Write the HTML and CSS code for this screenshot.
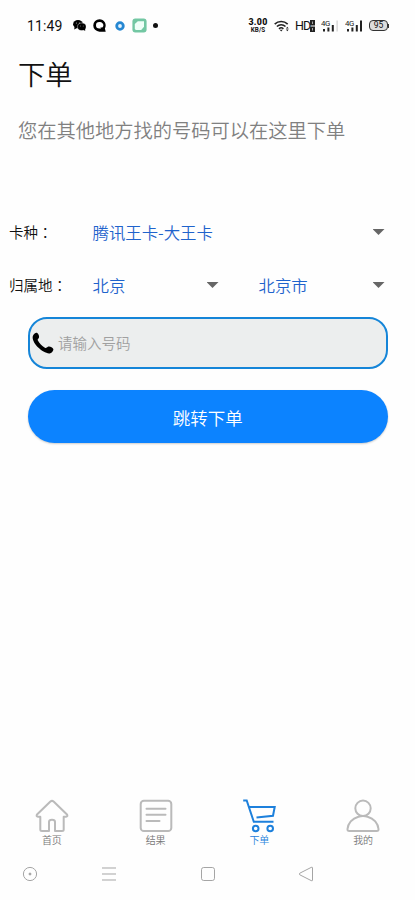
FILE: index.html
```html
<!DOCTYPE html>
<html lang="zh-CN">
<head>
<meta charset="utf-8">
<meta name="viewport" content="width=device-width, initial-scale=1">
<title>下单</title>
<link rel="stylesheet" href="styles.css">
</head>
<body>
<div class="screen">
  <header class="status">
    <div class="status-left">
      <span class="time">11:49</span>
      <svg class="ic-wechat" width="13" height="11" viewBox="0 0 13 11"><ellipse cx="5" cy="4.2" rx="4.9" ry="4.1"/><path d="M1.5 6.5 1.3 9.5 4.5 7.8z"/><ellipse cx="8.8" cy="6.8" rx="4.3" ry="3.8" stroke="#fff" stroke-width=".4"/><path d="M10 9.5 12.2 11 12 8.5z"/><g fill="#ccc"><circle cx="3.4" cy="3" r=".5"/><circle cx="6.4" cy="3" r=".5"/><circle cx="7.4" cy="6" r=".4"/><circle cx="10.2" cy="6" r=".4"/></g></svg>
      <svg class="ic-q" width="13" height="13" viewBox="0 0 13 13"><path fill-rule="evenodd" d="M6.5.2a6.2 6.2 0 0 1 5.4 9.2l.8 3.3H6.5A6.2 6.2 0 0 1 6.5.2zM6.3 3a3.3 3.3 0 0 0 0 6.6h1.8l-.8-1.2 2 .2A3.3 3.3 0 0 0 6.3 3z"/></svg>
      <svg class="ic-ring" width="10" height="10" viewBox="0 0 10 10"><circle cx="5" cy="5" r="3.3" fill="#e4f4ff" stroke="#2587d2" stroke-width="2.8"/></svg>
      <svg class="ic-chat" width="15" height="15" viewBox="0 0 15 15"><rect x=".4" y=".4" width="14.2" height="14.2" rx="3" fill="#73c7a3"/><path d="M5.8 3.2H12v5.6L9.2 12H3.9L2.8 11V6z" fill="#effff8"/></svg>
      <span class="more-dot"></span>
    </div>
    <div class="status-right">
      <div class="speed"><b>3.00</b><small>KB/S</small></div>
      <svg class="ic-wifi" width="16" height="12" viewBox="0 0 16 12"><g fill="none" stroke="#222" stroke-width="1.6"><path d="M.7 4.1a9.4 9.4 0 0 1 13 0M2.9 6.5a6.2 6.2 0 0 1 8.6 0M5 8.8a3.2 3.2 0 0 1 4.4 0"/></g><path d="M5.7 9.8h3L7.2 11.5zM11.9 8.5 13.3 6.8 14.7 8.5zM11.9 9.5h2.8l-1.4 1.7z" fill="#222"/></svg>
      <span class="hd">HD</span>
      <svg class="ic-sim" width="5" height="12" viewBox="0 0 5 12"><path d="M0 0h5v5.6H0zM0 6.4h5V12H0z" fill="#222"/><path d="M2 1.5h1v2.5H2zM2 8h1v2.4H2z" fill="#aaa"/></svg>
      <svg class="ic-signal one" width="18" height="13" viewBox="0 0 18 13"><text x="0" y="6.5">4G</text><path d="M2 10h2v2.5H2zM6.4 8.5h2v4h-2zM10.8 6h2v6.5h-2z" fill="#222"/><path d="M15.3 1.5h1.7v11h-1.7z" fill="#ddd"/></svg>
      <svg class="ic-signal two" width="18" height="13" viewBox="0 0 18 13"><text x="0" y="6.5">4G</text><path d="M2 10h2v2.5H2zM6.4 8.5h2v4h-2zM10.8 6h2v6.5h-2zM15 1.5h2v11h-2z" fill="#222"/></svg>
      <span class="battery">95</span><i class="battery-tip"></i>
    </div>
  </header>

  <main>
    <h1>下单</h1>
    <p class="desc">您在其他地方找的号码可以在这里下单</p>
    <div class="row">
      <span class="label">卡种<span class="colon" lang="zh-TW">：</span></span>
      <div class="select wide">腾讯王卡-大王卡<i class="caret"></i></div>
    </div>
    <div class="row">
      <span class="label">归属地<span class="colon" lang="zh-TW">：</span></span>
      <div class="select">北京<i class="caret"></i></div>
      <div class="select">北京市<i class="caret"></i></div>
    </div>
    <div class="field">
      <svg width="22" height="22" viewBox="0 0 22 22"><path d="M1.2 3.2 C2.3 1.2 4.3.1 5.5 1.2 C7 2.8 7.4 4.6 6.8 5.9 C6.2 7 5.3 7 5.9 8.6 C7.2 11.5 10 14.2 12.9 15.8 C14.4 16.5 14.5 15.4 15.9 14.8 C17.7 14.1 20.4 15.3 21.3 16.9 C21.8 18.4 20 20.6 18.3 21.2 C15.1 22.2 9.7 18.8 6.2 15.5 C2.6 12 -.7 6.5 1.2 3.2z"/></svg>
      <span>请输入号码</span>
    </div>
    <button class="submit" type="button">跳转下单</button>
  </main>

  <nav class="tabs">
    <a class="tab"><svg width="34" height="34" viewBox="0 0 34 34"><path d="M15.4 2.5 Q17 1.2 18.6 2.5 L32 15.5 Q33 17.5 31 17.7 H28.7 V30.5 Q28.7 32 27 32 H20 V23 Q20 20.7 17 20.7 T14 23 V32 H7 Q5.3 32 5.3 30.5 V17.7 H3 Q1 17.5 2 15.5z"/></svg><span>首页</span></a>
    <a class="tab"><svg width="34" height="34" viewBox="0 0 34 34"><rect x="1.7" y="1.7" width="30.6" height="30.4" rx="3.2"/><path d="M7.5 9.7h19M7.5 15.8h19M7.5 21.9h13"/></svg><span>结果</span></a>
    <a class="tab active"><svg width="34" height="34" viewBox="0 0 34 34"><path d="M1.2 1.5H4.7L11.8 22.8H31.5M6.5 8H32.7L31 16.8 14.5 18.6"/><circle cx="13.7" cy="29.5" r="2.8"/><circle cx="28.2" cy="29.5" r="2.8"/></svg><span>下单</span></a>
    <a class="tab"><svg width="34" height="34" viewBox="0 0 34 34"><circle cx="17" cy="9.3" r="7.7"/><path d="M12.4 17.7C6 19.4 2 24.5 1.5 30Q1.3 32 3.3 32H30.7Q32.7 32 32.5 30C32 24.5 28 19.4 21.6 17.7Q17 16.3 12.4 17.7z"/></svg><span>我的</span></a>
  </nav>

  <footer class="system">
    <svg width="16" height="16" viewBox="0 0 16 16"><circle cx="8" cy="8" r="6.6"/><circle cx="8" cy="8" r="1" fill="#999"/></svg>
    <svg width="16" height="16" viewBox="0 0 16 16"><path d="M1 2h14M1 8h14M1 14h14"/></svg>
    <svg width="16" height="16" viewBox="0 0 16 16"><rect x="1.5" y="1.5" width="13" height="13" rx="2.2"/></svg>
    <svg width="16" height="16" viewBox="0 0 16 16"><path d="M14.5 2V14Q14.5 15.3 13.2 14.6L1.8 8.8Q.6 8 1.8 7.2L13.2 1.4Q14.5.7 14.5 2z"/></svg>
  </footer>
</div>
</body>
</html>
```
FILE: styles.css
```css
* { box-sizing: border-box; }
body {
  margin: 0;
  background: #fefefe;
  color: #111;
  font-family: "Noto Sans CJK SC", sans-serif;
  font-weight: 350;
}
svg { display: block; flex: none; }
.screen {
  width: 415px;
  height: 900px;
  display: flex;
  flex-direction: column;
  overflow: hidden;
}

.status {
  height: 51px;
  padding: 0 26px 0 27px;
  display: flex;
  justify-content: space-between;
  align-items: center;
}
.status-left, .status-right { display: flex; align-items: center; }
.time { width: 36px; font: 14px/20px Roboto, sans-serif; letter-spacing: .1px; }
.ic-wechat { margin-left: 10px; }
.ic-q { margin-left: 7px; }
.ic-ring { margin-left: 8.5px; }
.ic-chat { margin-left: 7.5px; }
.more-dot { width: 5px; height: 5px; margin-left: 6px; border-radius: 50%; background: #111; }
.speed {
  width: 20px;
  display: flex;
  flex-direction: column;
  align-items: center;
  font-family: Roboto, sans-serif;
  font-weight: 700;
}
.speed b { font-size: 8.8px; line-height: 9px; letter-spacing: .3px; }
.speed small { font-size: 6.3px; line-height: 7px; letter-spacing: .1px; }
.ic-wifi { margin-left: 6px; }
.hd { width: 15px; margin-left: 5px; font: 12.5px/16px Roboto, sans-serif; letter-spacing: -1px; }
.ic-signal text { font: 400 7.8px Roboto, sans-serif; letter-spacing: -.5px; fill: #222; }
.one { margin-left: 6px; }
.two { margin-left: 6px; }
.battery {
  width: 19px;
  height: 11px;
  margin-left: 6px;
  border: 1px solid #333;
  border-radius: 4px;
  background: #ddd;
  font: 8.5px/9px Roboto, sans-serif;
  text-align: center;
}
.battery-tip { width: 1px; height: 4px; background: #333; }

main { display: flex; flex-direction: column; }
h1 {
  margin: 2px 0 0 18px;
  font-size: 27.3px;
  line-height: 40px;
  font-weight: 350;
}
.desc {
  margin: 22px 0 0 18px;
  color: #808080;
  font-size: 19.25px;
  line-height: 30px;
  white-space: nowrap;
}
.row {
  height: 53px;
  padding: 0 22px 0 9px;
  display: grid;
  grid-template-columns: 83.5px 134.5px 1fr;
  align-items: center;
}
.desc + .row { margin-top: 60px; }
.label { font-size: 14.5px; line-height: 20px; white-space: nowrap; }
.colon { font-family: "Noto Sans CJK TC", sans-serif; }
.select {
  display: flex;
  align-items: center;
  justify-content: space-between;
  color: #1f63cc;
  font-size: 16.4px;
  line-height: 24px;
}
.select + .select { margin-left: 31.5px; }
.wide { grid-column: 2 / 4; }
.caret { width: 12px; height: 6px; margin: 1px 8.5px 0 0; background: #666; clip-path: polygon(0 0, 100% 0, 50% 100%); }
.field {
  height: 52.5px;
  margin: 5.5px 27px 0 27.5px;
  padding-left: 2.5px;
  display: flex;
  align-items: center;
  gap: 4px;
  border: 2.5px solid #1585d8;
  border-radius: 19px;
  background: #eceeee;
  color: #a0a0a0;
  font-size: 14.5px;
}
.field span { margin-top: -1px; }
.submit {
  height: 53px;
  margin: 21px 27px 0 27.5px;
  padding: 2px 0 0;
  border: 0;
  border-radius: 27px;
  background: #0c83ff;
  box-shadow: 0 1px 2px #0003;
  color: #fff;
  font: 350 17.5px/26px "Noto Sans CJK SC", sans-serif;
}

.tabs {
  margin-top: auto;
  height: 51px;
  display: grid;
  grid-template-columns: repeat(4, 1fr);
}
.tab {
  display: flex;
  flex-direction: column;
  align-items: center;
  color: #777;
  font-size: 10px;
  line-height: 14px;
}
.tab svg { fill: none; stroke: #bababa; stroke-width: 2; stroke-linejoin: round; stroke-linecap: round; }
.tab span { margin-top: -.5px; }
.active { color: #1d80dc; }
.active svg { stroke: #1d80dc; stroke-linecap: butt; stroke-linejoin: miter; }
.system {
  height: 50px;
  padding: 16px 101px 0 21.5px;
  display: grid;
  grid-template-columns: 79px 99px 98.5px 16px;
}
.system svg { fill: none; stroke: #a5a5a5; stroke-width: 1; }
```
